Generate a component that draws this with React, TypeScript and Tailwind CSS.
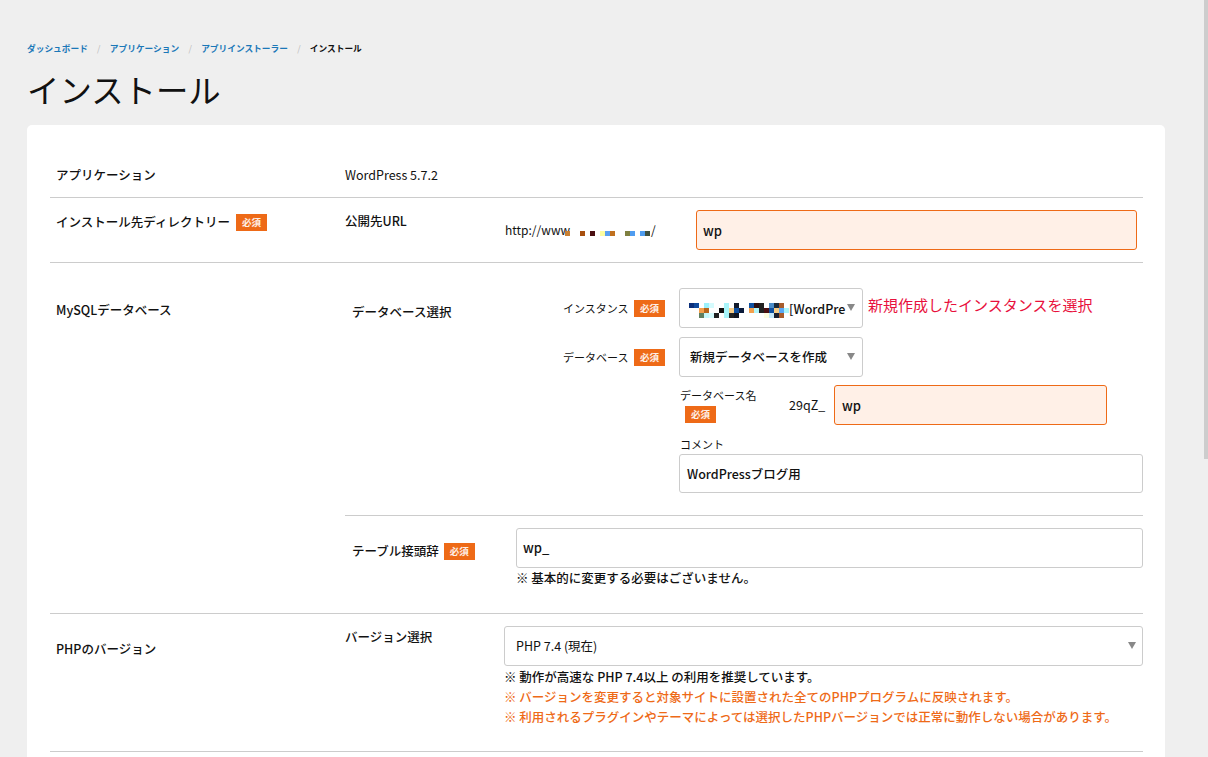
const font = { fontFamily: '"Noto Sans CJK JP", sans-serif' };

// mosaic cells: [x, y, colour], 5px blocks
const instanceCells: [number, number, string][] = [
  [0, 0, "#0b2f7a"], [5, 0, "#0f4a9c"], [15, 0, "#9cf1fb"], [20, 0, "#d5fbfd"], [35, 0, "#a8f5fa"], [45, 0, "#121a2a"],
  [60, 0, "#0e4fa0"], [65, 0, "#2a0f12"], [70, 0, "#222"], [80, 0, "#4a8cc8"], [85, 0, "#1a2a3a"], [90, 0, "#a85c2c"],
  [10, 5, "#f4a04c"], [15, 5, "#b8651c"], [30, 5, "#111"], [35, 5, "#a8f5fa"], [40, 5, "#f7cc85"], [45, 5, "#0e4fa0"], [50, 5, "#0a1a3a"],
  [60, 5, "#f4a04c"], [65, 5, "#b0f5fa"], [70, 5, "#222"], [75, 5, "#4a0f12"], [80, 5, "#0e4fa0"], [85, 5, "#f7cc85"], [90, 5, "#5aa8f5"], [95, 5, "#a8f5fa"],
  [10, 10, "#5f7f5f"], [15, 10, "#c4f7fa"], [20, 10, "#d5fbfd"], [25, 10, "#222"], [35, 10, "#a8f5fa"], [40, 10, "#222"], [45, 10, "#0f1420"],
  [75, 10, "#fdfde0"], [80, 10, "#c4e8fa"], [85, 10, "#1a2030"], [90, 10, "#a85c2c"],
];

const urlCells: [number, string][] = [
  [0, "#c98033"], [15, "#a8500f"], [25, "#4a0f12"], [35, "#fdfda0"], [40, "#5aa0f0"], [45, "#c0701f"], [60, "#7f8040"], [65, "#4f9cf0"], [75, "#4f9cf0"], [80, "#3f5040"],
];

function Badge({ className = "" }: { className?: string }) {
  return (
    <span className={`inline-flex h-[17px] w-[31px] shrink-0 items-center justify-center bg-[#ee6a17] text-[9.5px] font-bold text-white/90 ${className}`}>
      必須
    </span>
  );
}

function Caret() {
  return (
    <svg width="8" height="7" viewBox="0 0 8 7" className="mb-[2px] shrink-0">
      <path d="M0 0h8L4 7z" fill="#888" />
    </svg>
  );
}

function Crumb({ children }: { children: string }) {
  return (
    <>
      <span className="text-[#1b78b8]">{children}</span>
      <span className="w-[22px] text-center font-normal text-[#bbb]">/</span>
    </>
  );
}

export default function App() {
  return (
    <div style={font} className="flex h-[757px] w-[1208px] overflow-hidden bg-[#efefef] text-[12.5px] text-[#111]">
      <main className="w-[1204px] pl-[27px] pr-[39px] pt-[42px]">
        <div className="flex h-[14px] items-center text-[8.7px] font-bold">
          <Crumb>ダッシュボード</Crumb>
          <Crumb>アプリケーション</Crumb>
          <Crumb>アプリインストーラー</Crumb>
          <span>インストール</span>
        </div>
        <h1 className="mt-[8px] h-[61px] text-[32.4px] leading-[50px] font-normal">インストール</h1>

        <div className="rounded-t-[5px] bg-white pr-[22px] pl-[23px] pt-[25px]">
          {/* アプリケーション */}
          <div className="flex h-[48px] border-b border-[#ccc]">
            <div className="w-[295px] pt-[16px] pl-[6px] font-medium">アプリケーション</div>
            <div className="pt-[16px]">WordPress 5.7.2</div>
          </div>

          {/* ディレクトリー */}
          <div className="flex h-[65px] border-b border-[#ccc]">
            <div className="flex h-fit w-[295px] items-center gap-[6px] pt-[15px] pl-[6px] font-medium">
              インストール先ディレクトリー <Badge />
            </div>
            <div className="w-[160px] pt-[14px] font-medium">公開先URL</div>
            <div className="relative w-[191px] pt-[23px] text-[12px]">
              http://www
              <svg width="90" height="5" className="absolute top-[33px] left-[60px]">
                {urlCells.map(([x, c]) => (
                  <rect key={x} x={x} y="0" width="5" height="5" fill={c} />
                ))}
              </svg>
              <span className="absolute top-[23px] left-[146px]">/</span>
            </div>
            <div className="mt-[12px] flex h-[40px] w-[441px] items-center rounded-[3px] border border-[#ee6a17] bg-[#fff0e7] pt-[2px] pl-[6px] text-[13px] font-medium">
              wp
            </div>
          </div>

          {/* MySQL */}
          <div className="flex h-[351px] border-b border-[#ccc]">
            <div className="w-[295px] pt-[38px] pl-[6px] font-medium">MySQLデータベース</div>
            <div className="flex-1">
              <div className="flex h-[253px] border-b border-[#ccc]">
                <div className="w-[218px] pt-[40px] pl-[7px] font-medium">データベース選択</div>
                <div className="w-[102px] pt-[25px] text-[11px]">
                  <div className="flex h-[40px] items-center justify-between">
                    インスタンス <Badge />
                  </div>
                  <div className="mt-[9px] flex h-[40px] items-center justify-between">
                    データベース <Badge />
                  </div>
                </div>
                <div className="flex-1 pl-[14px] pt-[25px]">
                  <div className="flex items-center">
                    <div className="flex h-[40px] w-[184px] shrink-0 items-center justify-between rounded-[3px] border border-[#ccc] pr-[7px] pl-[9px] font-medium">
                      <span className="flex items-center pt-[2px]">
                        <svg width="100" height="15" className="mt-[3px] shrink-0">
                          {instanceCells.map(([x, y, c]) => (
                            <rect key={`${x}-${y}`} x={x} y={y} width="5" height="5" fill={c} />
                          ))}
                        </svg>
                        <span className="whitespace-nowrap">[WordPre</span>
                      </span>
                      <Caret />
                    </div>
                    <span className="mb-[6px] ml-[5px] text-[15px] text-[#e8103c]">新規作成したインスタンスを選択</span>
                  </div>
                  <div className="mt-[9px] flex h-[40px] w-[184px] items-center justify-between rounded-[3px] border border-[#ccc] pr-[7px] pl-[10px] font-medium">
                    新規データベースを作成
                    <Caret />
                  </div>
                  <div className="mt-[8px] flex h-[40px]">
                    <div className="w-[110px] text-[11px]">
                      <div className="pl-px leading-[20px]">データベース名</div>
                      <Badge className="ml-[6px]" />
                    </div>
                    <span className="w-[45px] pt-[11px]">29qZ_</span>
                    <div className="flex h-[40px] w-[273px] items-center rounded-[3px] border border-[#ee6a17] bg-[#fff0e7] pt-[2px] pl-[7px] text-[13px] font-medium">
                      wp
                    </div>
                  </div>
                  <div className="mt-[10px] pl-px text-[11px] leading-[19px]">コメント</div>
                  <div className="flex h-[39px] items-center rounded-[3px] border border-[#ccc] pt-[2px] pl-[7px] font-medium">
                    WordPressブログ用
                  </div>
                </div>
              </div>
              <div className="flex">
                <div className="flex h-fit w-[171px] items-center gap-[5px] pt-[26px] pl-[7px] font-medium">
                  テーブル接頭辞 <Badge />
                </div>
                <div className="flex-1 pt-[12px]">
                  <div className="flex h-[40px] items-center rounded-[3px] border border-[#ccc] pl-[6px] text-[13px] font-medium">wp_</div>
                  <p className="mt-px font-medium">※ 基本的に変更する必要はございません。</p>
                </div>
              </div>
            </div>
          </div>

          {/* PHP */}
          <div className="flex h-[138px] border-b border-[#ccc]">
            <div className="w-[295px] pt-[26px] pl-[6px] font-medium">PHPのバージョン</div>
            <div className="w-[159px] pt-[14px] font-medium">バージョン選択</div>
            <div className="flex-1 pt-[12px]">
              <div className="flex h-[40px] items-center justify-between rounded-[3px] border border-[#ccc] pr-[6px] pl-[11px]">
                PHP 7.4 (現在)
                <Caret />
              </div>
              <div className="mt-[1px] leading-[20px] font-medium">
                <p>※ 動作が高速な PHP 7.4以上 の利用を推奨しています。</p>
                <p className="text-[#ee6a17]">※ バージョンを変更すると対象サイトに設置された全てのPHPプログラムに反映されます。</p>
                <p className="text-[#ee6a17]">※ 利用されるプラグインやテーマによっては選択したPHPバージョンでは正常に動作しない場合があります。</p>
              </div>
            </div>
          </div>
          <div className="h-[10px]" />
        </div>
      </main>
      <div className="w-1">
        <div className="h-[459px] bg-[#cdcdcd]" />
      </div>
    </div>
  );
}
